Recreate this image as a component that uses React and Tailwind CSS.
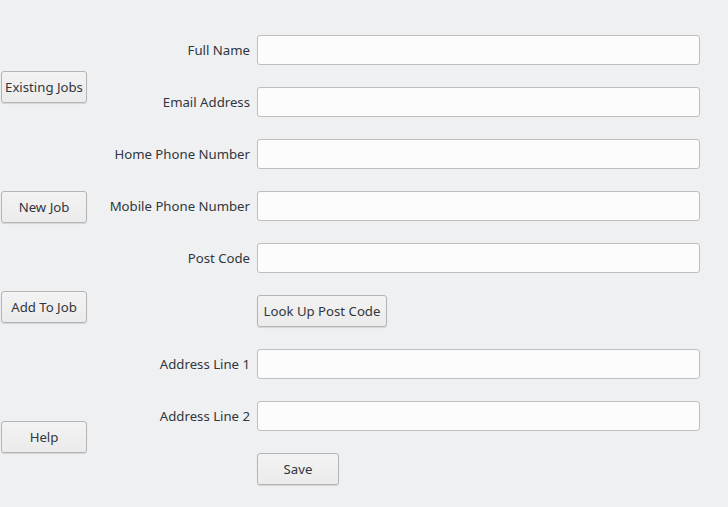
import React from "react";

const font = { fontFamily: '"Noto Sans", "Open Sans", sans-serif' };

function Btn({ children, className = "" }) {
  return (
    <button
      className={
        "h-[32px] rounded-[3px] border border-[#b3b5b6] bg-gradient-to-b from-[#f3f3f4] to-[#ebebec] pt-[2px] text-[13.2px] text-[#31363b] shadow-[0_1px_1px_rgba(0,0,0,0.12)] " +
        className
      }
    >
      {children}
    </button>
  );
}

function Field({ label }) {
  return (
    <>
      <div className="flex h-[30px] items-center justify-end pr-[-1px] pt-[2px] text-[13.2px] text-[#31363b]">{label}</div>
      <div className="h-[30px] rounded-[3px] border border-[#bcbebf] bg-[#fcfcfc]" />
    </>
  );
}

export default function App() {
  return (
    <div className="flex h-[507px] w-[728px] bg-[#eff0f1]" style={font}>
      <div className="flex w-[88px] flex-col pl-[1px]">
        <Btn className="mt-[71px] w-[86px]">Existing Jobs</Btn>
        <Btn className="mt-[88px] w-[86px]">New Job</Btn>
        <Btn className="mt-[68px] w-[86px]">Add To Job</Btn>
        <Btn className="mt-[98px] w-[86px]">Help</Btn>
      </div>
      <div className="grid flex-1 grid-cols-[162px_1fr] content-start gap-x-[7px] gap-y-[22px] pr-[28px] pt-[35px]">
        <Field label="Full Name" />
        <Field label="Email Address" />
        <Field label="Home Phone Number" />
        <Field label="Mobile Phone Number" />
        <Field label="Post Code" />
        <div />
        <div>
          <Btn className="w-[130px]">Look Up Post Code</Btn>
        </div>
        <Field label="Address Line 1" />
        <Field label="Address Line 2" />
        <div />
        <div>
          <Btn className="w-[82px]">Save</Btn>
        </div>
      </div>
    </div>
  );
}
